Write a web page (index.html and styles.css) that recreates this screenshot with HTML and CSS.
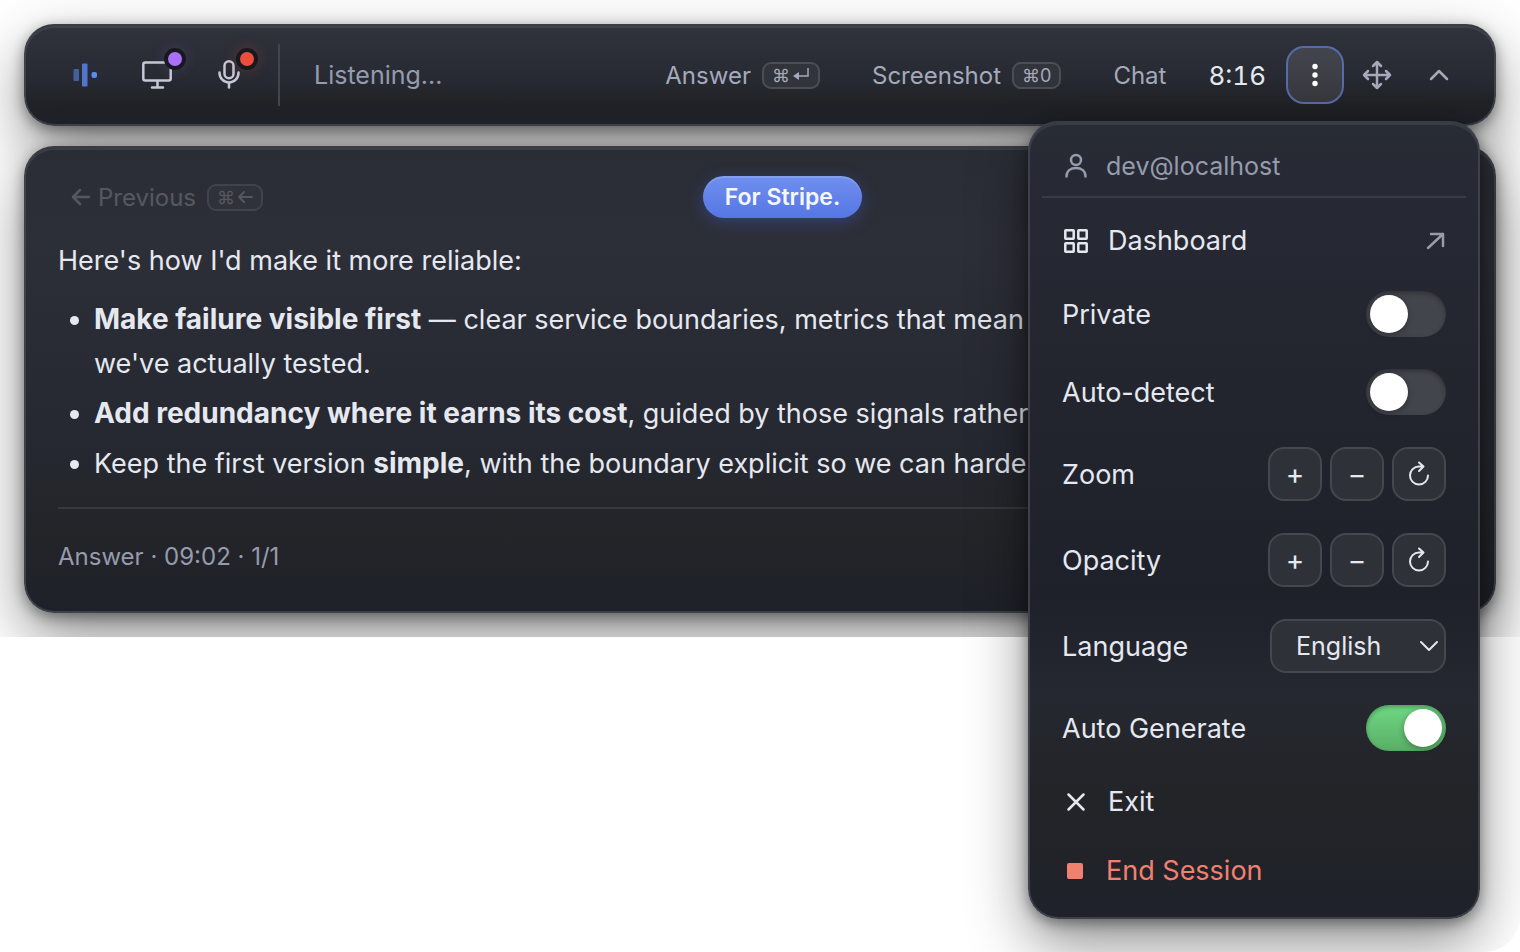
FILE: index.html
```html
<!DOCTYPE html>
<html lang="en">
<head>
    <meta charset="UTF-8">
    <meta name="viewport" content="width=device-width, initial-scale=1.0">
    <title>Assistant</title>
    <link rel="stylesheet" href="styles.css">
</head>
<body>
    <main class="window">
        <header class="surface toolbar">
            <div class="sources">
                <span class="source">
                    <svg class="logo" width="28" height="28" viewBox="0 0 28 28" aria-hidden="true">
                        <rect x="2.500" y="8" width="5.500" height="12" rx="1" opacity="0.55"/>
                        <rect x="11" y="2.500" width="5.500" height="23" rx="1" opacity="0.8"/>
                        <rect x="20.500" y="11" width="5.500" height="6" rx="2"/>
                    </svg>
                </span>
                <button class="source" aria-label="Screen">
                    <svg class="icon" width="32" height="32" viewBox="0 0 32 32" aria-hidden="true">
                        <rect x="2.300" y="3.500" width="27.400" height="18" rx="2"/>
                        <path d="M16.500 22v6M11 28.500h11"/>
                    </svg>
                    <span class="badge badge-purple"></span>
                </button>
                <button class="source" aria-label="Microphone">
                    <svg class="icon" width="32" height="32" viewBox="0 0 32 32" aria-hidden="true">
                        <rect x="11.500" y="2.300" width="9" height="17" rx="4.500"/>
                        <path d="M6.500 13.500v.5a9.500 9.500 0 0 0 19 0v-.5M16 23.500v5"/>
                    </svg>
                    <span class="badge badge-red"></span>
                </button>
            </div>
            <p class="status">Listening...</p>
            <div class="actions">
                <button class="action">Answer <kbd>⌘<svg class="key-icon" width="18" height="16" viewBox="0 0 18 16" aria-hidden="true"><path d="M16 1v8H3"/><path class="key-tip" d="M7 5v8L1 9z"/></svg></kbd></button>
                <button class="action">Screenshot <kbd>⌘0</kbd></button>
                <button class="action">Chat</button>
            </div>
            <time class="timer">8:16</time>
            <div class="tools">
                <button class="tool tool-active" aria-label="Menu" aria-expanded="true">
                    <svg width="28" height="28" viewBox="0 0 28 28" aria-hidden="true">
                        <circle cx="14" cy="5.500" r="2.700"/><circle cx="14" cy="14" r="2.700"/><circle cx="14" cy="22.500" r="2.700"/>
                    </svg>
                </button>
                <button class="tool" aria-label="Move">
                    <svg class="icon" width="32" height="32" viewBox="0 0 32 32" aria-hidden="true">
                        <path d="M16 3v26M3 16h26M12 7l4-4 4 4M12 25l4 4 4-4M7 12l-4 4 4 4M25 12l4 4-4 4"/>
                    </svg>
                </button>
                <button class="tool" aria-label="Collapse">
                    <svg class="icon" width="28" height="28" viewBox="0 0 28 28" aria-hidden="true">
                        <path d="M6 18l8-8 8 8"/>
                    </svg>
                </button>
            </div>
        </header>

        <section class="surface panel">
            <nav class="pager">
                <button class="page-btn" disabled>
                    <svg class="icon" width="22" height="22" viewBox="0 0 22 22" aria-hidden="true"><path d="M19 11H3M10 4l-7 7 7 7"/></svg>
                    Previous
                    <kbd>⌘<svg class="icon" width="16" height="16" viewBox="0 0 16 16" aria-hidden="true"><path d="M15 8H2M7 3L2 8l5 5"/></svg></kbd>
                </button>
                <span class="pill">For Stripe.</span>
                <button class="page-btn" disabled>
                    Next
                    <svg class="icon" width="22" height="22" viewBox="0 0 22 22" aria-hidden="true"><path d="M3 11h16M12 4l7 7-7 7"/></svg>
                    <kbd>⌘<svg class="icon" width="16" height="16" viewBox="0 0 16 16" aria-hidden="true"><path d="M1 8h13M9 3l5 5-5 5"/></svg></kbd>
                </button>
            </nav>
            <article class="answer">
                <p>Here's how I'd make it more reliable:</p>
                <ul>
                    <li><strong>Make failure visible first</strong> — clear service boundaries, metrics that mean<br>we've actually tested.</li>
                    <li><strong>Add redundancy where it earns its cost</strong>, guided by those signals rather</li>
                    <li>Keep the first version <strong>simple</strong>, with the boundary explicit so we can harden</li>
                </ul>
            </article>
            <footer class="meta">Answer · 09:02 · 1/1</footer>
        </section>
    </main>

    <div class="menu-window">
        <div class="surface menu">
            <div class="account">
                <svg class="icon" width="28" height="28" viewBox="0 0 28 28" aria-hidden="true">
                    <circle cx="14" cy="8" r="5"/>
                    <path d="M4.500 24.500c0-5.500 4-8.500 9.500-8.500s9.500 3 9.500 8.500"/>
                </svg>
                dev@localhost
            </div>
            <a class="row" href="#dashboard">
                <svg class="icon" width="28" height="28" viewBox="0 0 28 28" aria-hidden="true">
                    <rect x="3.300" y="3.300" width="8.400" height="8.400" rx="0.500"/><rect x="16.300" y="3.300" width="8.400" height="8.400" rx="0.500"/>
                    <rect x="3.300" y="16.300" width="8.400" height="8.400" rx="0.500"/><rect x="16.300" y="16.300" width="8.400" height="8.400" rx="0.500"/>
                </svg>
                Dashboard
                <svg class="icon external" width="20" height="20" viewBox="0 0 20 20" aria-hidden="true">
                    <path d="M2 17L17 3M5 3h12v12"/>
                </svg>
            </a>
            <div class="row">
                <label for="private">Private</label>
                <input class="switch" type="checkbox" id="private">
            </div>
            <div class="row">
                <label for="auto-detect">Auto-detect</label>
                <input class="switch" type="checkbox" id="auto-detect">
            </div>
            <div class="row">
                <span>Zoom</span>
                <div class="stepper">
                    <button aria-label="Zoom in">+</button>
                    <button aria-label="Zoom out">−</button>
                    <button aria-label="Reset zoom">
                        <svg class="icon" width="24" height="28" viewBox="0 0 24 28" aria-hidden="true"><path d="M21 15.500a9 9 0 1 1-9-9h4M12 2.500l4.500 4-4.500 4.500"/></svg>
                    </button>
                </div>
            </div>
            <div class="row">
                <span>Opacity</span>
                <div class="stepper">
                    <button aria-label="Increase opacity">+</button>
                    <button aria-label="Decrease opacity">−</button>
                    <button aria-label="Reset opacity">
                        <svg class="icon" width="24" height="28" viewBox="0 0 24 28" aria-hidden="true"><path d="M21 15.500a9 9 0 1 1-9-9h4M12 2.500l4.500 4-4.500 4.500"/></svg>
                    </button>
                </div>
            </div>
            <div class="row">
                <label for="language">Language</label>
                <div class="select">
                    <select id="language">
                        <option>English</option>
                    </select>
                    <svg class="icon" width="20" height="20" viewBox="0 0 20 20" aria-hidden="true"><path d="M2 6l8 8 8-8"/></svg>
                </div>
            </div>
            <div class="row">
                <label for="auto-generate">Auto Generate</label>
                <input class="switch" type="checkbox" id="auto-generate" checked>
            </div>
            <button class="row">
                <svg class="icon" width="28" height="28" viewBox="0 0 28 28" aria-hidden="true"><path d="M6.500 6.500l15 15M21.500 6.500l-15 15"/></svg>
                Exit
            </button>
            <button class="row row-danger">
                <svg width="28" height="28" viewBox="0 0 28 28" aria-hidden="true"><rect x="5" y="6" width="16" height="16" rx="2"/></svg>
                End Session
            </button>
        </div>
    </div>
</body>
</html>
```
FILE: styles.css
```css
* {
    box-sizing: border-box;
}
body {
    margin: 0;
    min-height: 100vh;
    position: relative;
    background: #fff;
    color: #e6e8f0;
    font-family: Inter, sans-serif;
    font-size: 27px;
}
button, select {
    border: 0;
    margin: 0;
    padding: 0;
    background: none;
    color: inherit;
    font: inherit;
    cursor: pointer;
}
p, ul {
    margin: 0;
}
svg {
    flex: none;
    fill: currentColor;
}
.icon {
    fill: none;
    stroke: currentColor;
    stroke-width: 2.5;
    stroke-linecap: round;
    stroke-linejoin: round;
}
.window {
    display: flex;
    flex-direction: column;
    gap: 20px;
    padding: 24px;
    overflow: hidden;
}
.surface {
    border: 2px solid #3e4149;
    border-top-color: #383c43;
    border-radius: 30px;
    box-shadow: 0 4px 14px rgba(0, 0, 0, 0.4), 0 24px 60px rgba(0, 0, 0, 0.45), inset 0 2px 0 rgba(255, 255, 255, 0.08);
}

/* toolbar */
.toolbar {
    display: flex;
    align-items: center;
    padding: 18px 26px 18px 31px;
    background: linear-gradient(#30323c, #272a32 55%, #212226 80%, #1f222a);
    color: #a5a9ba;
    font-size: 24px;
}
.sources {
    display: flex;
    gap: 16px;
    padding-right: 21px;
    border-right: 2px solid #43454c;
}
.source {
    position: relative;
    display: flex;
    align-items: center;
    justify-content: center;
    width: 56px;
    height: 62px;
    color: #c5c8d6;
}
.logo {
    color: #5b8af5;
}
.badge {
    position: absolute;
    top: 4px;
    right: -1px;
    width: 22px;
    height: 22px;
    border: 4px solid #17191f;
    border-radius: 50%;
}
.badge-purple {
    background: #a970fa;
    box-shadow: 0 0 14px rgba(169, 112, 250, 0.2);
}
.badge-red {
    background: #ec4d3d;
    box-shadow: 0 0 14px rgba(236, 77, 61, 0.25);
}
.status {
    flex: 1;
    padding-left: 34px;
    color: #969bad;
    font-size: 25px;
}
.actions {
    display: flex;
    gap: 12px;
}
.action {
    display: flex;
    align-items: center;
    gap: 11px;
    padding: 0 20px;
}
kbd {
    display: inline-flex;
    align-items: center;
    gap: 2px;
    height: 27px;
    padding: 0 8px;
    border: 2px solid #4c4e55;
    border-radius: 9px;
    background: #32343b;
    font-family: inherit;
    font-size: 18px;
}
kbd .icon {
    stroke-width: 2;
}
.key-icon path {
    fill: none;
    stroke: currentColor;
    stroke-width: 1.5;
}
.key-icon .key-tip {
    fill: currentColor;
    stroke: none;
}
.timer {
    padding: 0 20px 0 22px;
    color: #e6e8f0;
    font-size: 26px;
    font-variant-numeric: tabular-nums;
}
.tools {
    display: flex;
    gap: 4px;
}
.tool {
    display: flex;
    align-items: center;
    justify-content: center;
    width: 58px;
    height: 58px;
    border-radius: 18px;
}
.tool-active {
    border: 2px solid #566ba8;
    background: linear-gradient(#43454e, #38393e);
    color: #fff;
}

/* answer panel */
.panel {
    padding: 28px 32px 38px;
    background: linear-gradient(#2a2d35, #2d2f38 20%, #252830 65%, #242529 82%, #1e2129);
}
.pager {
    display: flex;
    align-items: center;
    justify-content: space-between;
    font-size: 24px;
}
.page-btn {
    display: flex;
    align-items: center;
    gap: 6px;
    padding: 0 12px;
    opacity: 0.22;
}
.page-btn kbd {
    margin-left: 5px;
    border-color: #8b8e98;
    background: #3d4048;
}
.pill {
    padding: 0 22px;
    border-radius: 21px;
    background: linear-gradient(#6f8ff0, #5676e4);
    box-shadow: 0 4px 16px rgba(70, 100, 230, 0.35), inset 0 2px 1px rgba(255, 255, 255, 0.15);
    color: #f5f7ff;
    font-size: 23px;
    font-weight: 600;
    line-height: 42px;
}
.answer {
    margin-top: 21px;
    padding-bottom: 21px;
    border-bottom: 2px solid #36383e;
    line-height: 44px;
}
.answer ul {
    margin-top: 15px;
    padding-left: 36px;
}
.answer li + li {
    margin-top: 6px;
}
.answer strong {
    font-size: 28px;
    line-height: 1;
}
.meta {
    padding-top: 32px;
    color: #969bad;
    font-size: 24px;
    line-height: 32px;
}

/* menu */
.menu-window {
    position: absolute;
    top: 0;
    right: 0;
    padding: 121px 40px 33px 120px;
    border-bottom-right-radius: 36px;
    overflow: hidden;
}
.menu {
    width: 452px;
    padding: 12px;
    background: linear-gradient(#282c35, #262833 12%, #22252e 35%, #1e2129 60%, #252830 72%, #232428 85%, #1f222a);
}
.account {
    display: flex;
    align-items: center;
    gap: 16px;
    height: 63px;
    margin-bottom: 8px;
    padding: 0 20px;
    border-bottom: 2px solid #393b45;
    color: #969bad;
    font-size: 25px;
}
.row {
    display: flex;
    align-items: center;
    gap: 18px;
    width: 100%;
    min-height: 69px;
    padding: 16px 20px;
    color: #e6e8f0;
    text-decoration: none;
}
.row-danger {
    gap: 16px;
    color: #f2806f;
}
.external,
.row .switch,
.stepper,
.select {
    margin-left: auto;
}
.external {
    color: #969bad;
}
.switch {
    appearance: none;
    width: 80px;
    height: 46px;
    margin: 0;
    padding: 4px;
    border-radius: 23px;
    background: #43454c;
    box-shadow: inset 0 2px 4px rgba(0, 0, 0, 0.3);
    cursor: pointer;
}
.switch::before {
    content: "";
    display: block;
    width: 38px;
    height: 38px;
    border-radius: 50%;
    background: #fff;
    box-shadow: 0 2px 6px rgba(0, 0, 0, 0.3);
}
.switch:checked {
    background: linear-gradient(#70d883, #58ae67);
}
.switch:checked::before {
    margin-left: auto;
}
.stepper {
    display: flex;
    gap: 8px;
}
.stepper button {
    display: flex;
    align-items: center;
    justify-content: center;
    width: 54px;
    height: 54px;
    border: 2px solid #45474e;
    border-radius: 16px;
    background: #2f3138;
    font-size: 28px;
}
.stepper .icon {
    stroke-width: 2;
}
.select {
    display: grid;
    align-items: center;
    width: 176px;
}
.select > * {
    grid-area: 1 / 1;
}
.select select {
    appearance: none;
    height: 54px;
    padding-left: 24px;
    border: 2px solid #45474e;
    border-radius: 16px;
    background: #2f3139;
    font-size: 25px;
}
.select svg {
    justify-self: end;
    margin-right: 7px;
    pointer-events: none;
    stroke-width: 2;
}
```
